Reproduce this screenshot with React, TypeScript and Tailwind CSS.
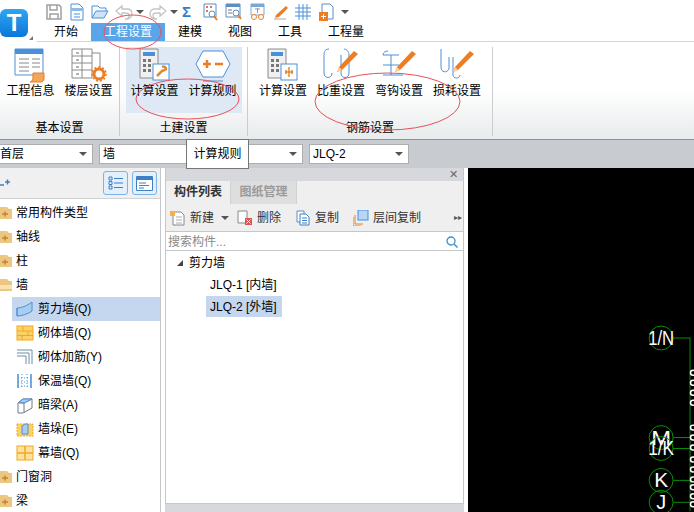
import React from "react";

const BLUE = "#4a90d9";
const ORANGE = "#ee7d22";

function Pencil({ x = 0, y = 0 }: { x?: number; y?: number }) {
  return (
    <g transform={`translate(${x} ${y})`}>
      <path d="M3 19 L18 3 L22 6 L6 22 L1 24 Z" fill={ORANGE} />
      <path d="M3 19 L6 22 L1 24 Z" fill="#f7d3a8" />
    </g>
  );
}

function QuickIcon({ kind }: { kind: string }) {
  const s = { fill: "none", stroke: BLUE, strokeWidth: 1 };
  return (
    <svg width="18" height="18" viewBox="0 0 18 18" className="block shrink-0">
      {kind === "save" && (
        <g fill="none" stroke="#a0a0a0" strokeWidth="1.5">
          <path d="M2 2h12l2 2v12H2z" />
          <path d="M5 2v5h7V2M5 16v-5h8v5" />
        </g>
      )}
      {kind === "new" && (
        <g {...s}>
          <path d="M3 1h8l4 4v12H3z" fill="#fff" />
          <rect x="3" y="5" width="12" height="3" fill="#8dbbe8" stroke="none" />
          <path d="M6 11h6M6 14h6" />
        </g>
      )}
      {kind === "open" && (
        <g {...s}>
          <path d="M1 15V3h6l2 2h6v3" />
          <path d="M1 15l4-7h12l-4 7z" fill="#cfe3f7" />
        </g>
      )}
      {kind === "undo" && <path d="M1 8l6-5v3h5c4 0 5 3 5 5s-2 5-5 5h-2c3 0 4-2 4-4s-2-2-4-2H7v3z" fill="none" stroke="#c4c4c4" strokeWidth="1.3" />}
      {kind === "redo" && <path d="M17 8l-6-5v3H6c-4 0-5 3-5 5s2 5 5 5h2c-3 0-4-2-4-4s2-2 4-2h3v3z" fill="none" stroke="#c4c4c4" strokeWidth="1.3" />}
      {kind === "find" && (
        <g>
          <path d="M3 1h12v13H3z" fill="#fff" stroke="#5a8fc4" />
          <path d="M5 3h2v2H5zM9 3h2v2H9zM5 7h2v2H5z" fill="#e0734a" />
          <circle cx="11" cy="11" r="3" fill="#fff" stroke="#5a8fc4" />
          <path d="M13 13l3 4" stroke={ORANGE} strokeWidth="2" />
        </g>
      )}
      {kind === "view" && (
        <g>
          <path d="M1 1h14v13H1z" fill="#fff" stroke="#5a8fc4" />
          <rect x="1" y="1" width="14" height="3" fill="#5a8fc4" />
          <path d="M3 7h4M3 10h4" stroke="#777" />
          <circle cx="11" cy="10" r="3" fill="#fff" stroke="#5a8fc4" />
          <path d="M13 12l3 4" stroke={ORANGE} strokeWidth="2" />
        </g>
      )}
      {kind === "glass" && (
        <g>
          <path d="M2 1h13v11H2z" fill="#fff" stroke="#7aa7d4" />
          <rect x="2" y="1" width="13" height="3" fill="#7aa7d4" />
          <path d="M6 6h5M8.500 5v5" stroke="#999" />
          <circle cx="5" cy="14" r="2.500" fill="#fff" stroke={ORANGE} />
          <circle cx="12" cy="14" r="2.500" fill="#fff" stroke={ORANGE} />
        </g>
      )}
      {kind === "pen" && (
        <g>
          <path d="M1 16h12" stroke="#aaa" />
          <path d="M3 12L13 3l2 2L6 14l-4 1z" fill={ORANGE} />
        </g>
      )}
      {kind === "grid" && <path d="M1 5h16M1 9h16M1 13h16M5 1v16M9 1v16M13 1v16" fill="none" stroke={BLUE} />}
      {kind === "add" && (
        <g>
          <path d="M4 1h8l3 3v12H4z" fill="#fff" stroke="#5a8fc4" />
          <rect x="1" y="9" width="9" height="9" fill={ORANGE} />
          <path d="M5.500 11v5M3 13.500h5" stroke="#fff" />
        </g>
      )}
    </svg>
  );
}

function RibbonIcon({ kind }: { kind: string }) {
  return (
    <svg width="36" height="36" viewBox="0 0 36 36" className="block">
      {kind === "info" && (
        <g>
          <path d="M2 2h28v26H2z" fill="#fff" stroke="#4a90d9" />
          <rect x="2" y="2" width="28" height="5" fill="#4a90d9" />
          <path d="M6 12h10M6 16h10M6 20h10M6 24h10M19 12h8M19 16h8M19 20h8" stroke="#888" />
          <path d="M20 26h11v6c0 3-3 3-3 3H17c3-1 3-3 3-9z" fill="#f2a55b" stroke={ORANGE} />
        </g>
      )}
      {kind === "floor" && (
        <g>
          <path d="M1 2h20v29H1z" fill="#fff" stroke="#8a8a8a" />
          <path d="M1 9h20M1 16h20M1 23h20M11 2v29M21 6h8v16" fill="none" stroke="#8a8a8a" />
          <path d="M5 6h3M5 13h3M5 20h3M5 27h3" stroke="#666" />
          <circle cx="28" cy="27" r="5" fill="none" stroke={ORANGE} strokeWidth="3" />
          <circle cx="28" cy="27" r="7" fill="none" stroke={ORANGE} strokeWidth="1.500" strokeDasharray="2 2" />
        </g>
      )}
      {(kind === "calc" || kind === "calc2") && (
        <g>
          <path d="M3 2h18v29H3z" fill="#f0f0f0" stroke="#8a8a8a" />
          <rect x="6" y="5" width="12" height="4" fill="#4a90d9" />
          <path d="M6 12h3v3H6zM11 12h3v3h-3zM6 17h3v3H6zM11 17h3v3h-3zM6 22h3v3H6zM11 22h3v3h-3z" fill="#777" />
          <rect x="16" y="17" width="16" height="16" fill="#fff" stroke="#4a90d9" />
          {kind === "calc" ? (
            <path d="M20 29l6-6M25 20c2-1 4 0 4 2l-3 2" fill="none" stroke="#e08a2c" strokeWidth="2.500" />
          ) : (
            <path d="M24 20v10M20 25h8M21 23v4M27 23v4" fill="none" stroke="#e08a2c" strokeWidth="1.500" />
          )}
        </g>
      )}
      {kind === "rule" && (
        <g>
          <path d="M8 4h20l7 13-7 13H8L1 17z" fill="#fff" stroke="#4a90d9" />
          <path d="M8 17h8M12 13v8M20 17h8" stroke={ORANGE} strokeWidth="2.500" />
          <path d="M8 34h20" stroke="#4a90d9" />
        </g>
      )}
      {kind === "density" && (
        <g>
          <path d="M6 2C1 2 1 6 1 10v16c0 6 8 6 8 0M18 8v18c0 6 8 6 8 0V8c0-4-3-6-5-6" fill="none" stroke="#4a90d9" />
          <Pencil x={13} y={1} />
        </g>
      )}
      {kind === "hook" && (
        <g>
          <path d="M2 8h16M10 8v20M2 28h20M2 8c0-3 3-4 5-4M2 18h16" fill="none" stroke="#4a90d9" />
          <Pencil x={13} y={1} />
        </g>
      )}
      {kind === "loss" && (
        <g>
          <path d="M2 2v18c0 6 6 6 8 2V10M14 10v18c0 4 7 4 7 0" fill="none" stroke="#4a90d9" />
          <Pencil x={13} y={1} />
        </g>
      )}
    </svg>
  );
}

function RibbonButton({ kind, label, active }: { kind: string; label: string; active?: boolean }) {
  return (
    <div className={`flex h-[66px] w-[58px] flex-col items-center ${active ? "bg-[#dfe8f5]" : ""}`}>
      <RibbonIcon kind={kind} />
      <span className="whitespace-nowrap">{label}</span>
    </div>
  );
}

function RibbonGroup({ label, width, children }: { label: string; width: string; children: React.ReactNode }) {
  return (
    <div className={`flex shrink-0 flex-col items-center border-r border-[#c9cdd0] ${width}`}>
      <div className="flex h-[72px] items-start gap-0">{children}</div>
      <div className="mt-[1px] leading-[16px]">{label}</div>
    </div>
  );
}

function Caret() {
  return <span className="block h-0 w-0 border-x-[4px] border-t-[4px] border-x-transparent border-t-[#555]" />;
}

function Select({ text, className }: { text: string; className: string }) {
  return (
    <div className={`flex h-[20px] items-center justify-between border border-[#adadad] bg-white pr-[5px] ${className}`}>
      <span>{text}</span>
      <Caret />
    </div>
  );
}

function Folder({ open }: { open?: boolean }) {
  return (
    <svg width="12" height="14" viewBox="0 0 12 14" className="shrink-0">
      <path d="M0 1h7l2 2h3v10H0z" fill="#edc77f" />
      {open ? (
        <path d="M0 7h12v4H0z" fill="#f8e2b5" />
      ) : (
        <path d="M2 8h6M5 5.500v5" stroke="#b88a3a" strokeWidth="1.500" />
      )}
    </svg>
  );
}

function WallIcon({ kind }: { kind: string }) {
  return (
    <svg width="18" height="18" viewBox="0 0 18 18" className="shrink-0">
      {kind === "shear" && (
        <g>
          <path d="M1 8c4 0 10-2 15-6v9c-4 3-10 5-15 5z" fill="#a8cdf0" stroke={BLUE} />
          <path d="M1 8v8" stroke={BLUE} />
        </g>
      )}
      {kind === "brick" && (
        <g>
          <rect x="1" y="2" width="16" height="14" fill="#fbd26a" stroke="#f2a91c" />
          <path d="M1 7h16M1 11.500h16M7 2v5M12 7v4.500M6 11.500V16" stroke="#f2a91c" />
        </g>
      )}
      {kind === "rebar" && <path d="M1 2h15v14M1 5h12v11M1 8h9v8" fill="none" stroke="#6d8ea8" />}
      {kind === "insul" && (
        <g fill="none">
          <path d="M2 2v14M15 2v14" stroke={BLUE} strokeWidth="1.500" />
          <path d="M6 2v14M11 2v14M2 6h13M2 10h13M2 14h13" stroke={BLUE} strokeDasharray="1 2" />
        </g>
      )}
      {kind === "beam" && (
        <g stroke="#778" fill="#fff">
          <path d="M2 7l5-4h9v9l-9 5H2z" />
          <path d="M2 7h6v10M8 7l8-4" />
          <path d="M3 6l4-3h9l-8 4z" fill="#a8cdf0" stroke={BLUE} />
        </g>
      )}
      {kind === "pier" && (
        <g>
          <rect x="1" y="4" width="16" height="12" fill="#fbd26a" stroke="#f2a91c" strokeDasharray="2 1" />
          <path d="M6 6l3-2h3v10H6z" fill="#a8cdf0" stroke={BLUE} />
        </g>
      )}
      {kind === "curtain" && (
        <g>
          <rect x="1" y="2" width="16" height="14" fill="#fde2a0" stroke="#f2a91c" />
          <path d="M1 9h16M9 2v14" stroke="#f2a91c" strokeWidth="1.500" />
        </g>
      )}
    </svg>
  );
}

function FolderRow({ label, open }: { label: string; open?: boolean }) {
  return (
    <div className="flex h-[24px] items-center gap-[4px]">
      <Folder open={open} />
      <span>{label}</span>
    </div>
  );
}

function WallRow({ kind, label, active }: { kind: string; label: string; active?: boolean }) {
  return (
    <div className={`ml-[12px] flex h-[24px] items-center gap-[4px] pl-[4px] ${active ? "bg-[#c5d7ef]" : ""}`}>
      <WallIcon kind={kind} />
      <span>{label}</span>
    </div>
  );
}

function ToolIcon({ kind }: { kind: string }) {
  return (
    <svg width="16" height="16" viewBox="0 0 16 16" className="shrink-0">
      {kind === "new" && (
        <g>
          <path d="M3 2h8l3 3v10H3z" fill="#fff" stroke="#888" />
          <path d="M6 7h6M6 10h6M6 13h6" stroke="#aaa" />
          <path d="M0 1h5v5H0z" fill="#f5b04c" />
        </g>
      )}
      {kind === "del" && (
        <g>
          <path d="M1 1h9v12H1z" fill="#fff" stroke="#888" />
          <rect x="8" y="8" width="7" height="7" fill="#d9534f" />
          <path d="M9.500 9.500l4 4M13.500 9.500l-4 4" stroke="#fff" />
        </g>
      )}
      {kind === "copy" && (
        <g>
          <path d="M2 1h7v11H2z" fill="#fff" stroke="#5a8fc4" />
          <path d="M5 4h6l3 3v8H5z" fill="#fff" stroke="#3f7fc4" />
          <path d="M7 8h5M7 10.500h5M7 13h5" stroke="#3f7fc4" />
        </g>
      )}
      {kind === "floor" && (
        <g>
          <path d="M0 7v9h8M2 5v9h8" fill="none" stroke={ORANGE} />
          <rect x="5" y="0" width="10" height="10" fill="#b7d5f5" stroke={BLUE} />
        </g>
      )}
    </svg>
  );
}

function Tool({ kind, label, className }: { kind: string; label: string; className?: string }) {
  return (
    <div className={`flex items-center gap-[4px] ${className ?? ""}`}>
      <ToolIcon kind={kind} />
      <span>{label}</span>
    </div>
  );
}

function CadCanvas() {
  const bubbles = [
    { t: "1/N", y: 170, w: 26 },
    { t: "M", y: 270, w: 20 },
    { t: "1/K", y: 281, w: 26 },
    { t: "K", y: 313, w: 14 },
    { t: "J", y: 335, w: 10 },
  ];
  const dots = [205, 215, 225, 235, 260, 270, 280, 292, 302, 312, 320, 329, 337];
  return (
    <svg className="block h-full w-full" viewBox="0 0 227 344">
      {bubbles.map((b) => (
        <g key={b.t}>
          <circle cx="194" cy={b.y} r="12" fill="none" stroke="#0a8f0a" />
          <path d={`M206 ${b.y}H223`} stroke="#0a8f0a" />
          <text
            x="194"
            y={b.y + 7}
            textAnchor="middle"
            fill="#fff"
            fontSize="20"
            textLength={b.w}
            lengthAdjust="spacingAndGlyphs"
            fontFamily="Liberation Sans, sans-serif"
          >
            {b.t}
          </text>
        </g>
      ))}
      <path d="M223 170V344" stroke="#0a8f0a" />
      {dots.map((y) => (
        <circle key={y} cx="226" cy={y} r="2.500" fill="none" stroke="#fff" strokeWidth="1.500" />
      ))}
    </svg>
  );
}

export default function App() {
  return (
    <div
      className="relative flex h-[512px] w-[694px] flex-col overflow-hidden bg-white text-[12px] leading-[16px] text-black"
      style={{ fontFamily: '"Liberation Sans", "Noto Sans CJK SC", sans-serif' }}
    >
      {/* title area */}
      <div className="flex h-[42px] shrink-0">
        <div className="relative flex w-[37px] shrink-0 items-center pt-[3px]">
          <div className="flex h-[28px] w-[28px] items-center justify-center rounded-[6px] bg-gradient-to-b from-[#2ea6f2] to-[#0a77d8] text-[24px] font-bold text-white">
            T
          </div>
          <span className="absolute bottom-[2px] left-[29px] h-0 w-0 border-b-[4px] border-l-[4px] border-b-[#777] border-l-transparent" />
        </div>
        <div className="flex flex-1 flex-col border-b border-[#d4d4d4]">
          <div className="flex h-[23px] items-center pl-[8px]">
            <QuickIcon kind="save" />
            <span className="ml-[5px]"><QuickIcon kind="new" /></span>
            <span className="ml-[5px]"><QuickIcon kind="open" /></span>
            <span className="ml-[6px] flex items-center gap-[3px]"><QuickIcon kind="undo" /><Caret /></span>
            <span className="ml-[5px] flex items-center gap-[3px]"><QuickIcon kind="redo" /><Caret /></span>
            <span className="ml-[4px] w-[16px] text-[15px] font-bold text-[#2f7fc8]">Σ</span>
            <span className="ml-[3px]"><QuickIcon kind="find" /></span>
            <span className="ml-[6px]"><QuickIcon kind="view" /></span>
            <span className="ml-[6px]"><QuickIcon kind="glass" /></span>
            <span className="ml-[6px]"><QuickIcon kind="pen" /></span>
            <span className="ml-[3px]"><QuickIcon kind="grid" /></span>
            <span className="ml-[6px]"><QuickIcon kind="add" /></span>
            <span className="ml-[5px]"><Caret /></span>
          </div>
          <div className="flex h-[18px] items-center">
            <span className="ml-[17px] w-[37px]">开始</span>
            <span className="flex h-[18px] w-[74px] items-center justify-center bg-[#5aa5ea] text-white">工程设置</span>
            <span className="ml-[13px] w-[50px]">建模</span>
            <span className="w-[50px]">视图</span>
            <span className="w-[50px]">工具</span>
            <span>工程量</span>
          </div>
        </div>
      </div>

      {/* ribbon */}
      <div className="flex h-[97px] shrink-0 items-start bg-gradient-to-b from-white from-50% to-[#e7ebec] pt-[5px]">
        <RibbonGroup label="基本设置" width="w-[120px]">
          <RibbonButton kind="info" label="工程信息" />
          <RibbonButton kind="floor" label="楼层设置" />
        </RibbonGroup>
        <RibbonGroup label="土建设置" width="w-[128px]">
          <RibbonButton kind="calc" label="计算设置" active />
          <RibbonButton kind="rule" label="计算规则" active />
        </RibbonGroup>
        <RibbonGroup label="钢筋设置" width="w-[245px]">
          <RibbonButton kind="calc2" label="计算设置" />
          <RibbonButton kind="density" label="比重设置" />
          <RibbonButton kind="hook" label="弯钩设置" />
          <RibbonButton kind="loss" label="损耗设置" />
        </RibbonGroup>
      </div>

      {/* selectors */}
      <div className="flex h-[29px] shrink-0 items-center gap-[6px] border-t border-[#8f9295] bg-[#c8cbcf]">
        <Select text="首层" className="w-[93px] border-l-0" />
        <Select text="墙" className="w-[204px] pl-[3px]" />
        <Select text="JLQ-2" className="w-[100px] pl-[3px]" />
      </div>

      {/* main */}
      <div className="flex min-h-0 flex-1">
        <div className="flex w-[161px] shrink-0 flex-col border-r border-[#c4c7cb]">
          <div className="flex h-[31px] shrink-0 items-center justify-between border-b border-[#cfd2d5] bg-[#f0f0f0] pr-[3px]">
            <svg width="10" height="10" viewBox="0 0 10 10">
              <path d="M0 7h4M5 4h5M7.500 1.500v5" stroke="#3f7fc4" strokeWidth="1.500" />
            </svg>
            <div className="flex gap-[4px]">
              <div className="flex h-[24px] w-[25px] items-center justify-center rounded-[3px] border border-[#7ab4ee] bg-[#e3effb]">
                <svg width="15" height="14" viewBox="0 0 15 14">
                  <path d="M1 1h3v3H1zM1 5.500h3v3H1zM1 10h3v3H1z" fill="none" stroke="#3f7fc4" />
                  <path d="M6 2.500h9M6 7h9M6 11.500h9" stroke="#3f7fc4" />
                </svg>
              </div>
              <div className="flex h-[24px] w-[25px] items-center justify-center rounded-[3px] border border-[#7ab4ee] bg-[#e3effb]">
                <svg width="17" height="15" viewBox="0 0 17 15">
                  <path d="M.5.500h16v14H.5z" fill="#fff" stroke="#3f7fc4" />
                  <rect x="1" y="1" width="15" height="3" fill="#3f7fc4" />
                  <path d="M3 7h7M3 9.500h10M3 12h5" stroke="#3f7fc4" />
                </svg>
              </div>
            </div>
          </div>
          <div className="pt-[2px]">
            <FolderRow label="常用构件类型" />
            <FolderRow label="轴线" />
            <FolderRow label="柱" />
            <FolderRow label="墙" open />
            <WallRow kind="shear" label="剪力墙(Q)" active />
            <WallRow kind="brick" label="砌体墙(Q)" />
            <WallRow kind="rebar" label="砌体加筋(Y)" />
            <WallRow kind="insul" label="保温墙(Q)" />
            <WallRow kind="beam" label="暗梁(A)" />
            <WallRow kind="pier" label="墙垛(E)" />
            <WallRow kind="curtain" label="幕墙(Q)" />
            <FolderRow label="门窗洞" />
            <FolderRow label="梁" />
          </div>
        </div>

        <div className="ml-[4px] flex w-[299px] shrink-0 flex-col">
          <div className="flex min-h-0 flex-1 flex-col border-x border-b border-[#c4c7cb]">
            <div className="flex h-[13px] shrink-0 items-center justify-end bg-[#d6d8db] pr-[5px] text-[11px] leading-none text-[#666]">
              ✕
            </div>
            <div className="flex h-[23px] shrink-0 bg-[#efefef]">
              <span className="flex w-[65px] items-center justify-center border-r border-[#cfd2d5] pb-[1px] font-bold text-[#333]">构件列表</span>
              <span className="flex w-[66px] items-center justify-center border-r border-[#cfd2d5] bg-[#dedede] pb-[1px] font-bold text-[#9a9a9a]">图纸管理</span>
            </div>
            <div className="flex h-[28px] shrink-0 items-center border-b border-[#c4c7cb] bg-[#efefef] pl-[4px] text-[#333]">
              <Tool kind="new" label="新建" />
              <span className="ml-[7px]"><Caret /></span>
              <Tool kind="del" label="删除" className="ml-[8px]" />
              <Tool kind="copy" label="复制" className="ml-[14px]" />
              <Tool kind="floor" label="层间复制" className="ml-[14px]" />
              <span className="ml-auto pr-[1px] text-[8px] text-[#555]">▸▸</span>
            </div>
            <div className="flex h-[19px] shrink-0 items-center justify-between border-b border-[#c4c7cb] pl-[2px] pr-[5px] pt-[2px] text-[#8a8a8a]">
              <span>搜索构件...</span>
              <svg width="12" height="12" viewBox="0 0 12 12">
                <circle cx="5" cy="5" r="4" fill="none" stroke="#3f8fc8" strokeWidth="1.300" />
                <path d="M8 8l3.500 3.500" stroke="#3f8fc8" strokeWidth="1.500" />
              </svg>
            </div>
            <div className="pt-[1px]">
              <div className="flex h-[22px] items-center pl-[11px]">
                <span className="mr-[6px] h-0 w-0 border-b-[6px] border-l-[6px] border-b-[#444] border-l-transparent" />
                <span>剪力墙</span>
              </div>
              <div className="flex h-[22px] items-center pl-[44px]">JLQ-1 [内墙]</div>
              <div className="ml-[40px] flex h-[21px] w-[76px] items-center bg-[#c5d7ef] pl-[4px]">JLQ-2 [外墙]</div>
            </div>
          </div>
          <div className="flex h-[8px] shrink-0 items-center justify-center bg-[#d6d8db]" />
        </div>

        <div className="ml-[4px] min-w-0 flex-1 bg-black">
          <CadCanvas />
        </div>
      </div>

      {/* tooltip over the selector */}
      <div className="absolute left-[186px] top-[139px] flex h-[30px] w-[63px] items-center justify-center border border-[#767676] bg-white">
        计算规则
      </div>

      {/* red hand drawn marks */}
      <svg className="pointer-events-none absolute left-0 top-0" width="694" height="512">
        <ellipse cx="132.500" cy="32" rx="28.500" ry="17" fill="none" stroke="#e8505a" />
        <ellipse cx="187.500" cy="99" rx="51.500" ry="20" fill="none" stroke="#e8505a" />
        <ellipse cx="387.500" cy="101.500" rx="72.500" ry="28.500" fill="none" stroke="#e8505a" />
      </svg>
    </div>
  );
}
